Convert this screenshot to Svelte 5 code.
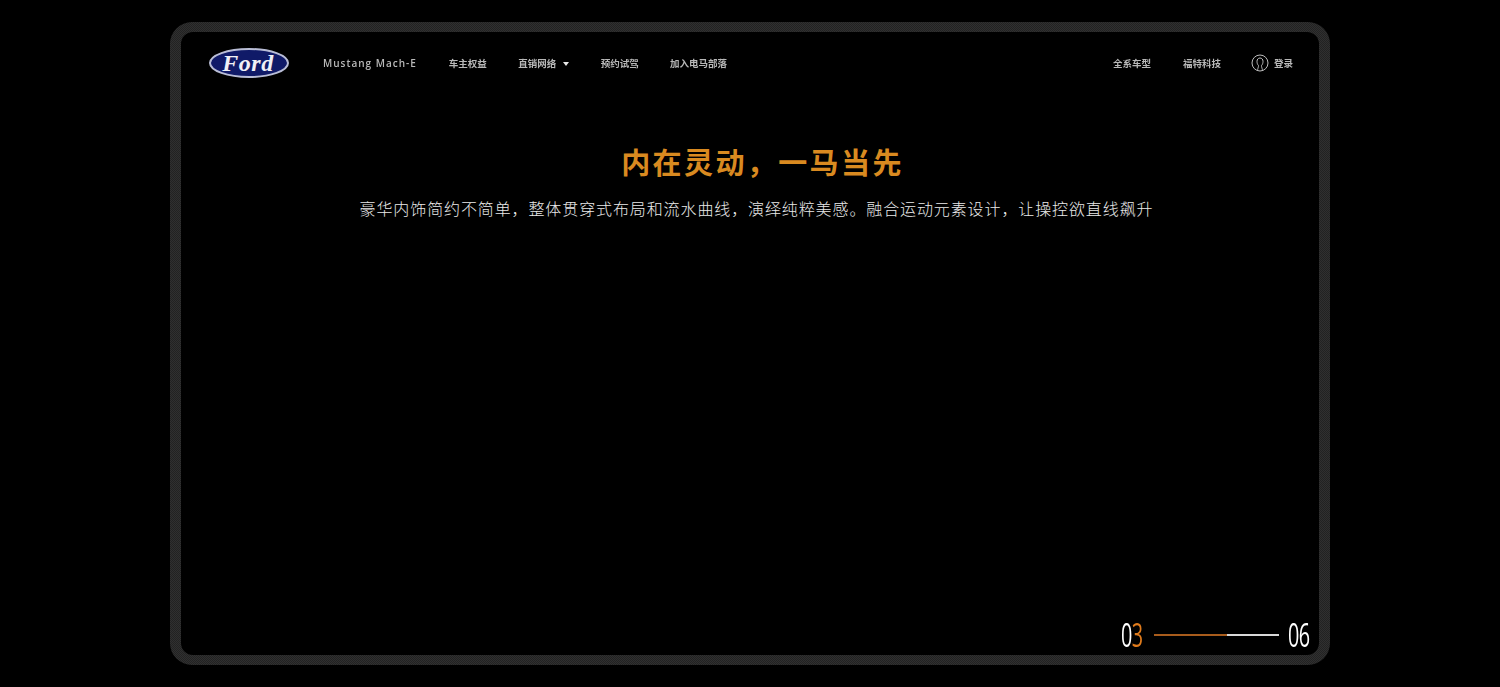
<script>
  const leftLinks = [
    { label: 'Mustang Mach-E', latin: true },
    { label: '车主权益' },
    { label: '直销网络', caret: true },
    { label: '预约试驾' },
    { label: '加入电马部落' },
  ];
  const rightLinks = ['全系车型', '福特科技'];
</script>

<div class="page">
  <div class="frame">
    <div class="screen">
      <nav class="nav">
        <svg class="logo" viewBox="0 0 82 32" width="82" height="32" aria-label="Ford">
          <ellipse cx="41" cy="16" rx="39" ry="14" fill="#101a68" stroke="#b9bdd6" stroke-width="2" />
          <text x="40" y="23.5" text-anchor="middle" class="logo-text">Ford</text>
        </svg>
        <div class="links">
          {#each leftLinks as link}
            <span class="link" class:latin={link.latin}>
              {link.label}
              {#if link.caret}<i class="caret"></i>{/if}
            </span>
          {/each}
        </div>
        <div class="links right">
          {#each rightLinks as label}
            <span class="link">{label}</span>
          {/each}
          <span class="link login">
            <svg viewBox="0 0 18 18" width="18" height="18" fill="none" stroke="#bdbdbd" stroke-width="1">
              <circle cx="9" cy="9" r="8" />
              <path d="M6.6 15.8c.4-2.2 1-3 .9-4.2C6.4 10.4 6 8.9 6 7.4 6 5.4 7.2 4 9 4s3 1.4 3 3.4c0 1.5-.4 3-1.5 4.2-.1 1.2.5 2 .9 4.2" />
            </svg>
            登录
          </span>
        </div>
      </nav>

      <header class="intro">
        <h1>内在灵动，一马当先</h1>
        <p>豪华内饰简约不简单，整体贯穿式布局和流水曲线，演绎纯粹美感。融合运动元素设计，让操控欲直线飙升</p>
      </header>

      <div class="pager">
        <span class="num">0<em>3</em></span>
        <div class="track"><div class="fill"></div></div>
        <span class="num last">06</span>
      </div>
    </div>
  </div>
</div>

<style>
  :global(body) { margin: 0; background: #000; }

  .page {
    height: 687px; box-sizing: border-box; padding-top: 22px;
    background: #000; display: flex; justify-content: center;
    font-family: "Liberation Sans", "Noto Sans CJK SC", sans-serif;
    overflow: hidden;
  }
  .frame {
    width: 1160px; height: 643px; box-sizing: border-box;
    padding: 10px 11px; border-radius: 22px;
    background: repeating-conic-gradient(#303030 0 25%, #222 0 50%) 0 0 / 2px 2px;
  }
  .screen {
    height: 100%; background: #000; border-radius: 12px;
    display: flex; flex-direction: column; box-sizing: border-box;
  }

  .nav {
    display: flex; align-items: center; height: 32px;
    padding: 15px 26px 0 27px; flex-shrink: 0;
  }
  .logo { flex-shrink: 0; }
  .logo-text {
    font-family: "Liberation Serif", serif; font-style: italic; font-weight: 700;
    font-size: 24px; fill: #f0f0f6; letter-spacing: 0.6px;
  }
  .links { display: flex; align-items: center; gap: 31.4px; margin-left: 34px; }
  .links.right { margin-left: auto; gap: 32px; }
  .link {
    font-size: 9.5px; font-weight: 700; color: #b8b8b8; white-space: nowrap;
    display: flex; align-items: center; filter: blur(0.5px);
  }
  .link.latin {
    font-family: "Open Sans", sans-serif; font-weight: 600; font-size: 10px;
    letter-spacing: 1px; margin-left: -1px; margin-right: 0.6px;
  }
  .caret {
    width: 0; height: 0; margin-left: 7px; margin-top: 1px;
    border: 3.5px solid transparent; border-top: 4px solid #e8e8e8; border-bottom: 0;
  }
  .login { gap: 5px; margin-left: -2px; }
  .login svg { flex-shrink: 0; }

  .intro { text-align: center; margin-top: 65px; }
  h1 {
    margin: 0 0 0 25px; font-size: 29px; line-height: 40px; font-weight: 700;
    letter-spacing: 2.4px; color: #d98a20;
  }
  p {
    margin: 6px 0 0 13px; padding-top: 8px; font-size: 16px; line-height: 24px;
    letter-spacing: 0.89px; color: #eaeaea; font-weight: 300;
  }

  .pager {
    margin-top: auto; padding: 0 10px 5px 0; display: flex; align-items: center;
    justify-content: flex-end; gap: 12px;
  }
  .num {
    font-family: "Open Sans", sans-serif; font-weight: 400; font-size: 33px; line-height: 30px;
    color: #fff; letter-spacing: -1px; white-space: nowrap;
    width: 21px; transform: scaleX(0.6); transform-origin: left center;
  }
  .num.last { margin-left: -3px; }
  .num em { font-style: normal; color: #e07b1c; }
  .track { width: 125px; height: 2px; background: #d8d8d8; }
  .fill { width: 73px; height: 2px; background: #a85c1c; }
</style>
